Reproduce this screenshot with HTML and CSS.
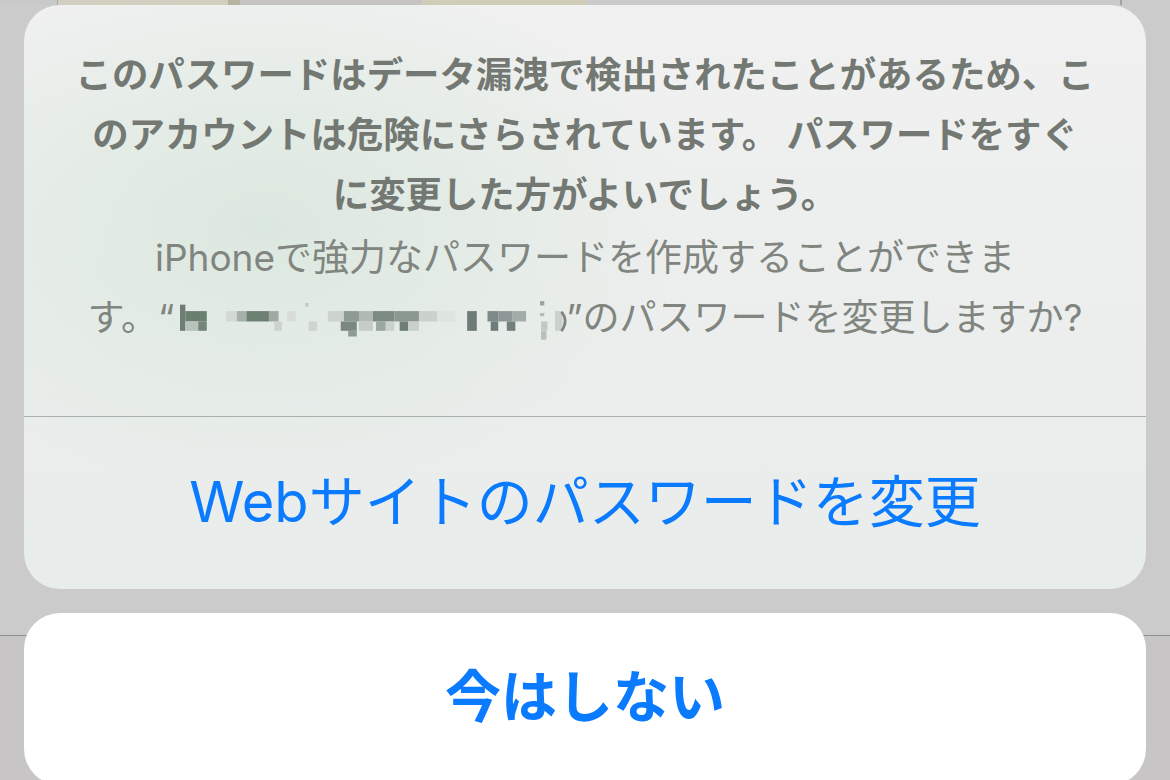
FILE: index.html
```html
<!DOCTYPE html>
<html lang="ja">
<head>
    <meta charset="UTF-8">
    <meta name="viewport" content="width=device-width, initial-scale=1.0">
    <title>パスワードを変更</title>
    <link rel="stylesheet" href="styles.css">
</head>
<body>
    <div class="backdrop">
        <span class="strip strip-a"></span>
        <span class="strip strip-line"></span>
        <span class="strip strip-b"></span>
        <span class="strip strip-c"></span>
        <span class="strip strip-d"></span>
        <span class="strip strip-e"></span>
        <span class="strip strip-f"></span>
        <span class="strip strip-edge"></span>
        <span class="strip strip-g"></span>
    </div>

    <div class="sheet">
        <div class="alert">
            <div class="alert-text">
                <p class="title">このパスワードはデータ漏洩で検出されたことがあるため、こ<br>のアカウントは危険にさらされています。 パスワードをすぐ<br>に変更した方がよいでしょう。</p>
                <p class="message">iPhoneで強力なパスワードを作成することができま<br>す。“<svg class="blur" width="390" height="41" viewBox="0 0 364 38">
                    <!-- pixelated site name -->
                    <rect x="0" y="3.3" width="5" height="24.4" fill="#6e7e72"/>
                    <rect x="5" y="9.3" width="20" height="9.7" fill="#6b7f6f"/>
                    <rect x="5" y="19" width="12" height="8.7" fill="#b8c1bb"/>
                    <rect x="17" y="19" width="8" height="8.7" fill="#74857a"/>
                    <rect x="43" y="9.3" width="10" height="9.7" fill="#d3d8d4"/>
                    <rect x="53" y="9.3" width="9" height="9.7" fill="#a6b0a9"/>
                    <rect x="62" y="9.3" width="21" height="9.7" fill="#6d8172"/>
                    <rect x="83" y="9.3" width="9" height="9.7" fill="#a0aaa3"/>
                    <rect x="88" y="19" width="7" height="8.7" fill="#ccd2ce"/>
                    <rect x="100" y="9.3" width="8" height="9.7" fill="#d9ddda"/>
                    <rect x="117" y="1.7" width="3" height="3.3" fill="#c0c7c2"/>
                    <rect x="120" y="19" width="8" height="8.7" fill="#cfd4d1"/>
                    <rect x="138" y="9.3" width="15" height="9.7" fill="#cdd3cf"/>
                    <rect x="153" y="9.3" width="14" height="9.7" fill="#8e9a92"/>
                    <rect x="150" y="19" width="15" height="8.7" fill="#7b887f"/>
                    <rect x="157" y="27.7" width="8" height="5.3" fill="#8e9a92"/>
                    <rect x="167" y="9.3" width="13" height="9.7" fill="#b0b9b3"/>
                    <rect x="167" y="19" width="13" height="8.7" fill="#c6cdc8"/>
                    <rect x="180" y="9.3" width="20" height="9.7" fill="#7b8b81"/>
                    <rect x="183" y="19" width="9" height="8.7" fill="#9ba7a0"/>
                    <rect x="192" y="19" width="8" height="8.7" fill="#cbd1cd"/>
                    <rect x="200" y="9.3" width="23" height="9.7" fill="#8b9791"/>
                    <rect x="205" y="19" width="8" height="8.7" fill="#6e7e76"/>
                    <rect x="213" y="19" width="10" height="8.7" fill="#cad0cc"/>
                    <rect x="223" y="9.3" width="17" height="9.7" fill="#cbd1cd"/>
                    <rect x="240" y="9.3" width="17" height="9.7" fill="#e0e4e1"/>
                    <rect x="268" y="9.3" width="9" height="18.4" fill="#6e7b77"/>
                    <rect x="287" y="9.3" width="10" height="9.7" fill="#7f8a88"/>
                    <rect x="297" y="9.3" width="13" height="9.7" fill="#8d9896"/>
                    <rect x="310" y="9.3" width="13" height="9.7" fill="#a3aca9"/>
                    <rect x="290" y="19" width="7" height="8.7" fill="#6f7b79"/>
                    <rect x="305" y="19" width="8" height="8.7" fill="#737f7d"/>
                    <rect x="336" y="0" width="4" height="4" fill="#9aa39f"/>
                    <rect x="336" y="11" width="4" height="3" fill="#b4bcb8"/>
                    <rect x="337" y="19" width="6" height="8.7" fill="#c3cac6"/>
                    <rect x="337" y="28" width="5" height="8" fill="#b8c0bb"/>
                    <rect x="350" y="9.3" width="7" height="18.4" fill="#cbd1cd"/>
                    <path d="M356 10 q7 8 0 18" fill="none" stroke="#7e8480" stroke-width="2.5"/>
                </svg>”のパスワードを変更しますか?</p>
            </div>
            <button class="action">Webサイトのパスワードを変更</button>
        </div>
        <button class="cancel">今はしない</button>
    </div>
</body>
</html>
```

FILE: styles.css
```css
*{
    padding: 0;
    margin: 0;
    box-sizing: border-box;
}
body{
    height: 780px;
    overflow: hidden;
    font-family: Inter, "Noto Sans CJK JP", sans-serif;
    background: linear-gradient(to bottom, #cbcbcb 0, #cbcbcb 635px, #8f8f8f 635px, #8f8f8f 636px, #c7c5c6 636px);
}
.backdrop{
    display: flex;
    height: 5px;
}
.strip{
    display: block;
    height: 100%;
}
.strip-a{ width: 57px; background: #c9c9c9; }
.strip-line{ width: 1px; background: #a9a9a9; }
.strip-b{ width: 170px; background: #d3cfc0; }
.strip-c{ width: 12px; background: #b8b3a0; }
.strip-d{ width: 182px; background: #c5c4c1; }
.strip-e{ width: 164px; background: #cfccb8; }
.strip-f{ width: 534px; background: #cacaca; }
.strip-edge{ width: 2px; background: #9fa1ab; }
.strip-g{ flex: 1; background: #cbcbcb; }

.sheet{
    display: flex;
    flex-direction: column;
    gap: 24px;
    padding: 0 24px;
}
.alert{
    border-radius: 36px;
    overflow: hidden;
    background:
        radial-gradient(ellipse 420px 260px at 240px 220px, rgba(214,230,218,0.75), rgba(214,230,218,0) 100%),
        linear-gradient(to bottom, #f0f1f0, #e8ecea);
}
.alert-text{
    padding: 40px 10px 68px;
    text-align: center;
    border-bottom: 1px solid #a9b1ad;
}
.title{
    font-size: 36.4px;
    line-height: 60px;
    font-weight: 700;
    color: #737873;
}
.message{
    margin-top: 3px;
    font-size: 37px;
    line-height: 60px;
    color: #80857f;
}
.blur{
    vertical-align: -11px;
    margin: 0 -4px 0 6px;
}
.action, .cancel{
    display: block;
    width: 100%;
    border: none;
    background: transparent;
    font-family: Inter, "Noto Sans CJK JP", sans-serif;
    font-size: 56px;
    color: #0a7aff;
}
.action{
    height: 172px;
    padding-bottom: 12px;
    font-weight: 400;
}
.cancel{
    height: 172px;
    padding-bottom: 14px;
    background: #ffffff;
    border-radius: 36px;
    font-weight: 700;
}
```
